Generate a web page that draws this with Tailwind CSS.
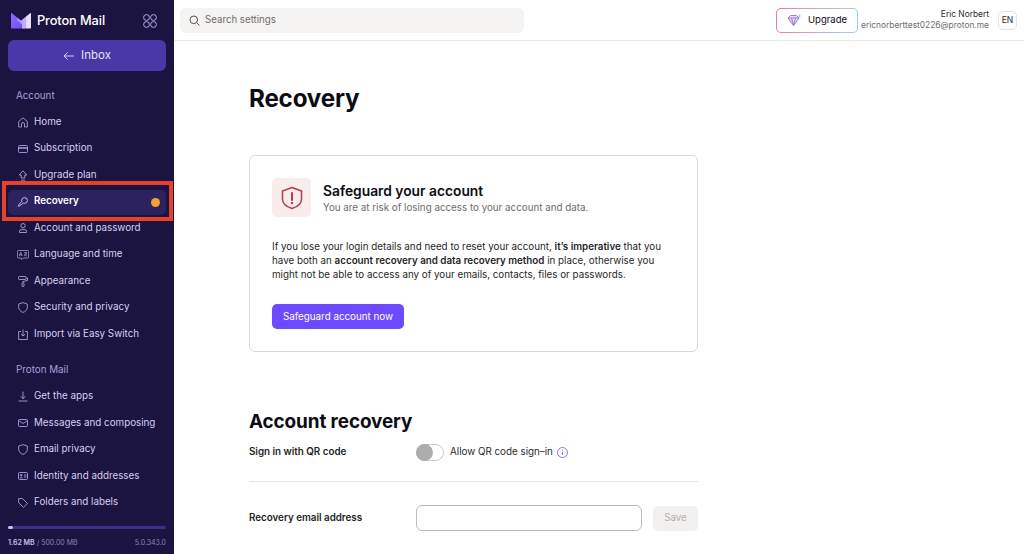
<!doctype html>
<html>
<head>
<meta charset="utf-8">
<script src="https://cdn.jsdelivr.net/npm/@tailwindcss/browser@4"></script>
</head>
<body class="m-0">
<div class="flex h-[554px] w-[1024px] overflow-hidden bg-white font-['Inter',sans-serif] text-[#0c0c14]">
  <aside class="relative flex h-full w-[174px] shrink-0 flex-col bg-[#1b1340] text-[#d6cff0]">
    <div class="flex h-[40px] items-center pl-[11px] pr-[16px] pt-[1px]">
      <svg width="20" height="16" viewBox="0 0 20 16"><defs><linearGradient id="pm" x1="0" y1="0" x2="1" y2="1"><stop offset="0" stop-color="#8a6cff"/><stop offset="1" stop-color="#6d4aff"/></linearGradient><linearGradient id="pn" x1="0" y1="0" x2="1" y2="0"><stop offset="0" stop-color="#a58cff"/><stop offset="1" stop-color="#c9b8ff"/></linearGradient></defs><path d="M0 .6 C0 .1 .5 -.1 .9 .2 L10 7.800 L14.500 4 V15.600 H1.200 A1.200 1.200 0 0 1 0 14.400 Z" fill="url(#pm)"/><path d="M6 4.500 10 7.800 14.500 4 V15.600 H11 V11.300 L6 7.200 Z" fill="url(#pn)"/><path d="M14.500 15.600 V4 L19.100 .2 C19.500 -.1 20 .1 20 .6 V14.400 A1.200 1.200 0 0 1 18.800 15.600 Z" fill="#e6deff"/></svg>
      <span class="ml-[6px] text-[12.800px] font-medium tracking-[-0.1px] text-white">Proton Mail</span>
      <svg class="ml-auto mr-[1px]" width="14" height="14" viewBox="0 0 14 14" fill="none" stroke="#b5a9e6"><circle cx="3.500" cy="3.500" r="2.900"/><circle cx="10.500" cy="3.500" r="2.900"/><circle cx="3.500" cy="10.500" r="2.900"/><circle cx="10.500" cy="10.500" r="2.900"/></svg>
    </div>
    <div class="mx-[8px] flex h-[31px] items-center justify-center gap-[6px] rounded-[6px] bg-[#4a37a8] pt-px text-[11.500px] text-[#e6e1f8]">
      <svg width="12" height="10" viewBox="0 0 12 10" fill="none" stroke="#d6cff0"><path d="M11 5H1M4.500 1.500 1 5l3.500 3.500"/></svg>
      <span>Inbox</span>
    </div>
    <div class="pl-[16px] pt-[18px] text-[9.800px] leading-[13px] text-[#a99fd8]">Account</div>
    <nav class="mt-[7px] flex flex-col text-[9.800px]">
      <div class="flex h-[26.500px] items-center pl-[18px]">
        <svg class="mr-[6px] w-[10px]" width="10" height="11" viewBox="0 0 10 11" fill="none" stroke="#a99fd8" stroke-width=".9"><path d="M.7 4.500 5 .8l4.300 3.700V10H6.500V7a1.500 1.500 0 0 0-3 0v3H.7Z"/></svg><span>Home</span>
      </div>
      <div class="flex h-[26.500px] items-center pl-[18px]">
        <svg class="mr-[6px] w-[10px]" width="10" height="8" viewBox="0 0 10 8" fill="none" stroke="#a99fd8" stroke-width=".9"><rect x=".5" y=".5" width="9" height="7" rx="1"/><path d="M.5 3h9" stroke-width="1.500"/></svg><span>Subscription</span>
      </div>
      <div class="flex h-[26.500px] items-center pl-[18px]">
        <svg class="mr-[6px] w-[10px]" width="10" height="11" viewBox="0 0 10 11" fill="none" stroke="#a99fd8" stroke-width=".9"><path d="M5 .8 8.800 5H6.800v3H3.200V5H1.200ZM3 10.200h4"/></svg><span>Upgrade plan</span>
      </div>
      <div class="relative flex h-[26.500px] items-center pl-[18px] font-semibold text-white">
        <div class="absolute left-[2px] top-[-8px] h-[40px] w-[171px] border-[4px] border-[#e8412a]"></div>
        <div class="absolute left-[8px] top-[1px] h-[25px] w-[158px] rounded-[5px] bg-[#2c2260]"></div>
        <svg class="relative mr-[6px] w-[10px]" width="10" height="10" viewBox="0 0 10 10" fill="none" stroke="#d6cff0" stroke-width=".9"><path d="M9.400 3.400A2.900 2.900 0 0 1 6.500 6.300c-.4 0-.8-.1-1.100-.2L.7 9.400V7.700L3.800 4.600a2.900 2.900 0 0 1 2.700-4A2.900 2.900 0 0 1 9.400 3.400Z"/></svg><span class="relative">Recovery</span>
        <div class="absolute left-[151px] top-[9px] h-[9px] w-[9px] rounded-full bg-[#f5a02f]"></div>
      </div>
      <div class="flex h-[26.500px] items-center pl-[18px]">
        <svg class="mr-[6px] w-[10px]" width="10" height="10" viewBox="0 0 10 10" fill="none" stroke="#a99fd8" stroke-width=".9"><circle cx="5" cy="2.700" r="2.200"/><path d="M1.500 9.500V8.200a1.500 1.500 0 0 1 1.500-1.500h4a1.500 1.500 0 0 1 1.500 1.500v1.300Z"/></svg><span>Account and password</span>
      </div>
      <div class="flex h-[26.500px] items-center pl-[17px]">
        <svg class="mr-[5px] w-[12px]" width="12" height="10" viewBox="0 0 12 10" fill="none" stroke="#a99fd8" stroke-width=".8"><path d="M1.400.5h9.200a1 1 0 0 1 1 .9v5.700a1 1 0 0 1-1 .9H6.500L5 9.500 4.200 8H1.400a1 1 0 0 1-1-.9V1.400a1 1 0 0 1 1-.9Z"/><path d="M2.200 6 3.700 2.400 5.200 6M2.800 4.800h1.800M7 2.800h3M8.500 2.400v.5M9.500 2.800C9.200 4.300 8.200 5.500 7 6M7.700 4c.4.900 1.200 1.600 2.200 2"/></svg><span>Language and time</span>
      </div>
      <div class="flex h-[26.500px] items-center pl-[18px]">
        <svg class="mr-[6px] w-[10px]" width="10" height="11" viewBox="0 0 10 11" fill="none" stroke="#a99fd8" stroke-width=".9"><rect x=".5" y=".5" width="7.500" height="3" rx=".8"/><path d="M8 2h1.500v2.500L5 5.500V7"/><rect x="4" y="7" width="2" height="3.500" rx=".5"/></svg><span>Appearance</span>
      </div>
      <div class="flex h-[26.500px] items-center pl-[18px]">
        <svg class="mr-[6px] w-[10px]" width="10" height="11" viewBox="0 0 10 11" fill="none" stroke="#a99fd8" stroke-width=".9"><path d="M5 .6 9.300 2v3.500C9.300 8 7 9.800 5 10.400 3 9.800.7 8 .7 5.500V2Z"/></svg><span>Security and privacy</span>
      </div>
      <div class="flex h-[26.500px] items-center pl-[18px]">
        <svg class="mr-[6px] w-[10px]" width="10" height="11" viewBox="0 0 10 11" fill="none" stroke="#a99fd8" stroke-width=".9"><path d="M3 2.500H.6v8h8.800v-8H7M5 .5v6.500M3 5.200 5 7l2-1.800"/></svg><span>Import via Easy Switch</span>
      </div>
    </nav>
    <div class="pl-[16px] pt-[15px] text-[9.800px] leading-[13px] text-[#a99fd8]">Proton Mail</div>
    <nav class="mt-[8px] flex flex-col text-[9.800px]">
      <div class="flex h-[26.500px] items-center pl-[18px]">
        <svg class="mr-[6px] w-[10px]" width="10" height="11" viewBox="0 0 10 11" fill="none" stroke="#a99fd8" stroke-width=".9"><path d="M5 .6v7M2.500 5.200 5 7.600l2.500-2.400M.5 10h9"/></svg><span>Get the apps</span>
      </div>
      <div class="flex h-[26.500px] items-center pl-[18px]">
        <svg class="mr-[6px] w-[10px]" width="10" height="8" viewBox="0 0 10 8" fill="none" stroke="#a99fd8" stroke-width=".9"><rect x=".5" y=".5" width="9" height="7" rx="1"/><path d="M.7 1.500 5 4.500l4.300-3"/></svg><span>Messages and composing</span>
      </div>
      <div class="flex h-[26.500px] items-center pl-[18px]">
        <svg class="mr-[6px] w-[10px]" width="10" height="11" viewBox="0 0 10 11" fill="none" stroke="#a99fd8" stroke-width=".9"><path d="M5 .6 9.300 2v3.500C9.300 8 7 9.800 5 10.400 3 9.800.7 8 .7 5.500V2Z"/></svg><span>Email privacy</span>
      </div>
      <div class="flex h-[26.500px] items-center pl-[18px]">
        <svg class="mr-[6px] w-[10px]" width="10" height="8" viewBox="0 0 10 8" fill="none" stroke="#a99fd8" stroke-width=".9"><rect x=".5" y=".5" width="9" height="7" rx="1"/><circle cx="3.200" cy="3.200" r=".8" fill="#a99fd8"/><path d="M1.800 5.800h2.800M6 3h2.500M6 5h2.500"/></svg><span>Identity and addresses</span>
      </div>
      <div class="flex h-[26.500px] items-center pl-[18px]">
        <svg class="mr-[6px] w-[10px]" width="10" height="10" viewBox="0 0 10 10" fill="none" stroke="#a99fd8" stroke-width=".9"><path d="M.6.6h4L9.400 5.400 5.400 9.400.6 4.600Z"/></svg><span>Folders and labels</span>
      </div>
    </nav>
    <div class="absolute bottom-0 left-0 right-0 bg-[#1b1340] px-[8px] pb-[6px] pt-[11px]">
      <div class="h-[3px] w-full rounded-full bg-[#3b2f85]"><div class="h-[3px] w-[5px] rounded-full bg-[#c9c0ee]"></div></div>
      <div class="mt-[9px] flex items-center justify-between text-[7px] leading-[10px] text-[#8d84bd]">
        <span><b class="font-semibold text-[#c9c0ee]">1.62 MB</b> / 500.00 MB</span><span>5.0.343.0</span>
      </div>
    </div>
  </aside>
  <div class="flex min-w-0 flex-1 flex-col">
    <header class="flex h-[41px] shrink-0 items-center border-b border-[#eaeaea] pl-[6px] pr-[7px]">
      <div class="flex h-[25px] w-[344px] items-center gap-[5px] rounded-[6px] bg-[#f5f4f2] pl-[9px] text-[9.700px] text-[#6f6d6a]">
        <svg width="11" height="11" viewBox="0 0 11 11" fill="none" stroke="#55534f"><circle cx="4.800" cy="4.800" r="3.800"/><path d="m7.600 7.600 2.900 2.900"/></svg>
        <span>Search settings</span>
      </div>
      <div class="ml-auto flex h-[25px] w-[82px] items-center justify-center rounded-[5px] bg-gradient-to-r from-[#ee75a8] to-[#8fd3f0] p-px">
        <div class="flex h-full w-full items-center justify-center gap-[6px] rounded-[4px] bg-white text-[9.500px]">
          <svg width="15" height="13" viewBox="0 0 15 13" fill="none"><path d="M1 4 3.500 1.500h6L12 4 6.500 11.500Z" fill="#e9dcf7" stroke="#a06bd0" stroke-width=".9"/><path d="M1 4h11M4.500 4l2 7.500 2-7.500" stroke="#8a6ad8" stroke-width=".8"/><path d="M12.500 .5v3M11 2h3" stroke="#8fcff0" stroke-width=".9"/></svg>
          <span>Upgrade</span>
        </div>
      </div>
      <div class="ml-[3px] flex flex-col items-end text-[8.400px] leading-[11.500px]">
        <span class="text-[#2b2b2b]">Eric Norbert</span>
        <span class="text-[#6f6d6a]">ericnorberttest0226@proton.me</span>
      </div>
      <div class="ml-[9px] flex h-[19px] w-[19px] items-center justify-center rounded-[5px] border border-[#e3e2e0] text-[8.500px] text-[#2b2b2b]">EN</div>
    </header>
    <main class="pl-[75px]">
      <h1 class="mt-[42px] text-[24.200px] font-bold leading-[32px] tracking-[-0.2px]">Recovery</h1>
      <section class="mt-[40px] h-[197px] w-[449px] rounded-[6px] border border-[#d9d8d6] px-[22px] pt-[22px]">
        <div class="flex items-center gap-[12px]">
          <div class="flex h-[39px] w-[39px] items-center justify-center rounded-[5px] bg-[#f8ecec]">
            <svg width="22" height="24" viewBox="0 0 22 24" fill="none"><path d="M11 1.500 20.500 5v8c0 5-4.500 8-9.500 9.500C6 21 1.500 18 1.500 13V5Z" stroke="#b93a45" stroke-width="1.500"/><path d="M11 7v7" stroke="#b93a45" stroke-width="2" stroke-linecap="round"/><circle cx="11" cy="17" r="1.200" fill="#b93a45"/></svg>
          </div>
          <div>
            <div class="text-[13.800px] font-semibold leading-[18px]">Safeguard your account</div>
            <div class="mt-[1px] text-[9.800px] leading-[13px] text-[#706d6b]">You are at risk of losing access to your account and data.</div>
          </div>
        </div>
        <p class="mt-[23px] text-[9.800px] leading-[14px] text-[#1f1f1f]">If you lose your login details and need to reset your account, <b class="font-semibold">it’s imperative</b> that you have both an <b class="font-semibold">account recovery and data recovery method</b> in place, otherwise you might not be able to access any of your emails, contacts, files or passwords.</p>
        <div class="mt-[22px] flex h-[25px] w-[132px] items-center justify-center rounded-[5px] bg-[#6d4aff] pt-px text-[9.800px] text-white">Safeguard account now</div>
      </section>
      <h2 class="mt-[57px] text-[18.900px] font-bold leading-[26px] tracking-[-0.1px]">Account recovery</h2>
      <div class="mt-[2px] flex h-[30px] w-[449px] items-center text-[9.800px]">
        <div class="w-[167px] font-semibold text-[#1f1f1f]">Sign in with QR code</div>
        <div class="relative h-[17px] w-[28px] rounded-full border border-[#c9c8c6]"><div class="absolute left-[-1px] top-[-1px] h-[17px] w-[17px] rounded-full bg-[#adadad]"></div></div>
        <span class="ml-[6px] text-[#2b2b2b]">Allow QR code sign–in</span>
        <svg class="ml-[4px]" width="11" height="11" viewBox="0 0 11 11" fill="none" stroke="#6d4aff" stroke-width=".8"><circle cx="5.500" cy="5.500" r="5"/><path d="M5.500 4.800v3.200M5.500 2.800v1"/></svg>
      </div>
      <div class="mt-[14px] h-px w-[449px] bg-[#e6e5e3]"></div>
      <div class="mt-[23px] flex w-[449px] items-center text-[9.800px]">
        <div class="w-[167px] font-semibold text-[#1f1f1f]">Recovery email address</div>
        <div class="h-[26px] w-[226px] rounded-[6px] border border-[#bdbcba] bg-white"></div>
        <div class="ml-[11px] flex h-[25px] w-[45px] items-center justify-center rounded-[5px] bg-[#f2f1ef] text-[#b0afad]">Save</div>
      </div>
    </main>
  </div>
</div>
</body>
</html>
